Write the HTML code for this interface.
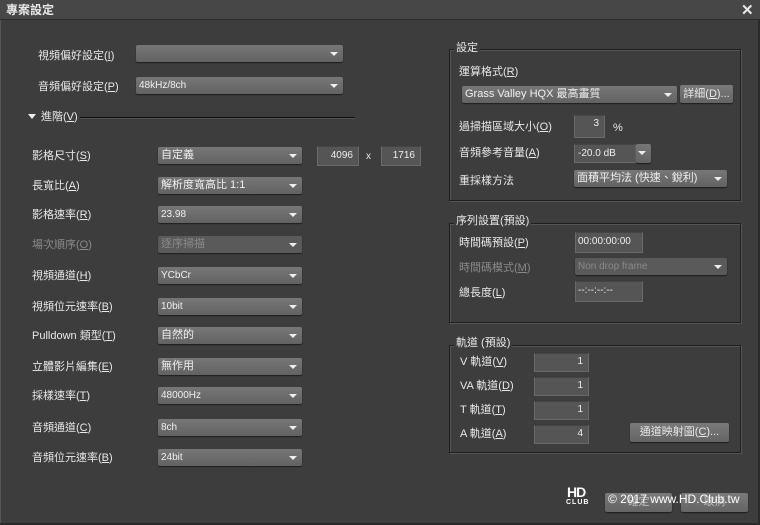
<!DOCTYPE html>
<html><head><meta charset="utf-8"><style>
*{margin:0;padding:0;box-sizing:border-box}
body{width:760px;height:525px;background:#3d3d3d;font-family:"Liberation Sans","Noto Sans CJK TC",sans-serif;color:#e8e8e8;font-size:11px;position:relative;overflow:hidden}
.a{position:absolute;white-space:nowrap}
.t{line-height:14px}
.dd{position:absolute;height:17px;background:linear-gradient(#777,#626262);border-radius:2px;box-shadow:0 1px 1px #1e1e1e;font-size:10px;line-height:17px;padding-left:3px;color:#f0f0f0}
.dd:after{content:"";position:absolute;right:5px;top:7px;border-left:4px solid transparent;border-right:4px solid transparent;border-top:4px solid #eee}
.dis{background:#5a5a5a;color:#8a8a8a}
.in{position:absolute;background:#555;border:1px solid #6a6a6a;border-top-color:#444;color:#eee;font-size:10px;text-align:right;padding-right:5px}
.bt{position:absolute;background:linear-gradient(#7a7a7a,#646464);border-radius:2px;box-shadow:0 1px 1px #1e1e1e;text-align:center;font-size:11px;line-height:18px}
.box{position:absolute;border:1px solid #1f1f1f;box-shadow:inset 1px 1px 0 #555,1px 1px 0 #555}
.lg{position:absolute;background:#3d3d3d;padding:0 2px;font-size:11px;line-height:13px}
.gr{color:#8a8a8a}
</style></head><body>
<div class="a" style="left:0;top:0;width:760px;height:20px;background:#474747;border-bottom:1px solid #2a2a2a"></div>
<div class="a t" style="left:6px;top:3px;font-weight:bold;font-size:12px">專案設定</div>
<div class="a" style="left:741px;top:1px;font-size:15px;font-weight:bold">✕</div>
<div class="a" style="left:0;top:20px;width:1px;height:505px;background:#555"></div>
<div class="a" style="left:758px;top:20px;width:2px;height:505px;background:#2a2a2a"></div>
<div class="a" style="left:0;top:523px;width:760px;height:2px;background:#2a2a2a"></div>

<div class="a t" style="left:38px;top:49px">視頻偏好設定(<u>I</u>)</div>
<div class="dd" style="left:136px;top:45px;width:207px"></div>
<div class="a t" style="left:38px;top:80px">音頻偏好設定(<u>P</u>)</div>
<div class="dd" style="left:136px;top:77px;width:207px">48kHz/8ch</div>
<div class="a" style="left:28px;top:114px;border-left:4px solid transparent;border-right:4px solid transparent;border-top:5px solid #eee"></div>
<div class="a t" style="left:41px;top:110px">進階(<u>V</u>)</div>
<div class="a" style="left:80px;top:117px;width:275px;height:1px;background:#111;box-shadow:0 1px 0 #555"></div>

<div class="a t" style="left:32px;top:149px">影格尺寸(<u>S</u>)</div><div class="dd" style="left:158px;top:147px;width:144px;font-size:11px">自定義</div>
<div class="in" style="left:317px;top:146px;width:42px;height:20px;line-height:18px">4096</div>
<div class="a t" style="left:366px;top:150px;font-size:10px">x</div>
<div class="in" style="left:381px;top:146px;width:40px;height:20px;line-height:18px">1716</div>
<div class="a t" style="left:32px;top:179px">長寬比(<u>A</u>)</div><div class="dd" style="left:158px;top:177px;width:144px;font-size:11px">解析度寬高比 1:1</div>
<div class="a t" style="left:32px;top:208px">影格速率(<u>R</u>)</div><div class="dd" style="left:158px;top:206px;width:144px">23.98</div>
<div class="a t gr" style="left:32px;top:238px">場次順序(<u>O</u>)</div><div class="dd dis" style="left:158px;top:236px;width:144px;font-size:11px">逐序掃描</div>
<div class="a t" style="left:32px;top:269px">視頻通道(<u>H</u>)</div><div class="dd" style="left:158px;top:267px;width:144px">YCbCr</div>
<div class="a t" style="left:32px;top:300px">視頻位元速率(<u>B</u>)</div><div class="dd" style="left:158px;top:298px;width:144px">10bit</div>
<div class="a t" style="left:32px;top:329px">Pulldown 類型(<u>T</u>)</div><div class="dd" style="left:158px;top:327px;width:144px;font-size:11px">自然的</div>
<div class="a t" style="left:32px;top:360px">立體影片編集(<u>E</u>)</div><div class="dd" style="left:158px;top:358px;width:144px;font-size:11px">無作用</div>
<div class="a t" style="left:32px;top:389px">採樣速率(<u>T</u>)</div><div class="dd" style="left:158px;top:387px;width:144px">48000Hz</div>
<div class="a t" style="left:32px;top:421px">音頻通道(<u>C</u>)</div><div class="dd" style="left:158px;top:419px;width:144px">8ch</div>
<div class="a t" style="left:32px;top:451px">音頻位元速率(<u>B</u>)</div><div class="dd" style="left:158px;top:449px;width:144px">24bit</div>

<div class="box" style="left:449px;top:49px;width:292px;height:152px"></div>
<div class="lg" style="left:454px;top:42px">設定</div>
<div class="a t" style="left:459px;top:65px">運算格式(<u>R</u>)</div>
<div class="dd" style="left:462px;top:86px;width:215px;font-size:11px">Grass Valley HQX 最高畫質</div>
<div class="bt" style="left:680px;top:85px;width:53px">詳細(<u>D</u>)...</div>
<div class="a t" style="left:459px;top:120px">過掃描區域大小(<u>O</u>)</div>
<div class="in" style="left:574px;top:115px;width:31px;height:23px;line-height:16px">3</div>
<div class="a t" style="left:613px;top:121px">%</div>
<div class="a t" style="left:459px;top:146px">音頻參考音量(<u>A</u>)</div>
<div class="in" style="left:574px;top:144px;width:62px;height:19px;line-height:17px;text-align:left;padding-left:3px">-20.0 dB</div>
<div class="dd" style="left:636px;top:144px;width:15px;height:19px"></div>
<div class="a t" style="left:459px;top:174px">重採樣方法</div>
<div class="dd" style="left:574px;top:170px;width:153px;font-size:11px">面積平均法 (快速、銳利)</div>

<div class="box" style="left:449px;top:223px;width:292px;height:100px"></div>
<div class="lg" style="left:454px;top:215px">序列設置(預設)</div>
<div class="a t" style="left:459px;top:236px">時間碼預設(<u>P</u>)</div>
<div class="in" style="left:575px;top:232px;width:68px;height:21px;line-height:17px;text-align:left;padding-left:2px">00:00:00:00</div>
<div class="a t gr" style="left:459px;top:261px">時間碼模式(<u>M</u>)</div>
<div class="dd dis" style="left:575px;top:258px;width:152px">Non drop frame</div>
<div class="a t" style="left:459px;top:286px">總長度(<u>L</u>)</div>
<div class="in" style="left:575px;top:281px;width:68px;height:21px;line-height:17px;text-align:left;padding-left:2px">--:--:--:--</div>

<div class="box" style="left:449px;top:345px;width:292px;height:108px"></div>
<div class="lg" style="left:454px;top:337px">軌道 (預設)</div>
<div class="a t" style="left:460px;top:355px">V 軌道(<u>V</u>)</div><div class="in" style="left:534px;top:353px;width:55px;height:19px;line-height:16px">1</div>
<div class="a t" style="left:460px;top:379px">VA 軌道(<u>D</u>)</div><div class="in" style="left:534px;top:377px;width:55px;height:19px;line-height:16px">1</div>
<div class="a t" style="left:460px;top:403px">T 軌道(<u>T</u>)</div><div class="in" style="left:534px;top:401px;width:55px;height:19px;line-height:16px">1</div>
<div class="a t" style="left:460px;top:427px">A 軌道(<u>A</u>)</div><div class="in" style="left:534px;top:425px;width:55px;height:19px;line-height:16px">4</div>
<div class="bt" style="left:630px;top:423px;width:99px;height:19px">通道映射圖(<u>C</u>)...</div>

<div class="bt" style="left:605px;top:493px;width:67px;height:19px;color:#bbb">確定</div>
<div class="bt" style="left:681px;top:493px;width:67px;height:19px;color:#bbb">取消</div>
<div class="a" style="left:567px;top:486px;font-size:14px;font-weight:bold;color:#fff;line-height:12px;letter-spacing:-1px">HD</div>
<div class="a" style="left:566px;top:499px;font-size:7px;font-weight:bold;color:#fff;letter-spacing:1px">CLUB</div>
<div class="a" style="left:608px;top:492px;font-size:12px;color:#fff">© 2017 www.HD.Club.tw</div>
</body></html>
